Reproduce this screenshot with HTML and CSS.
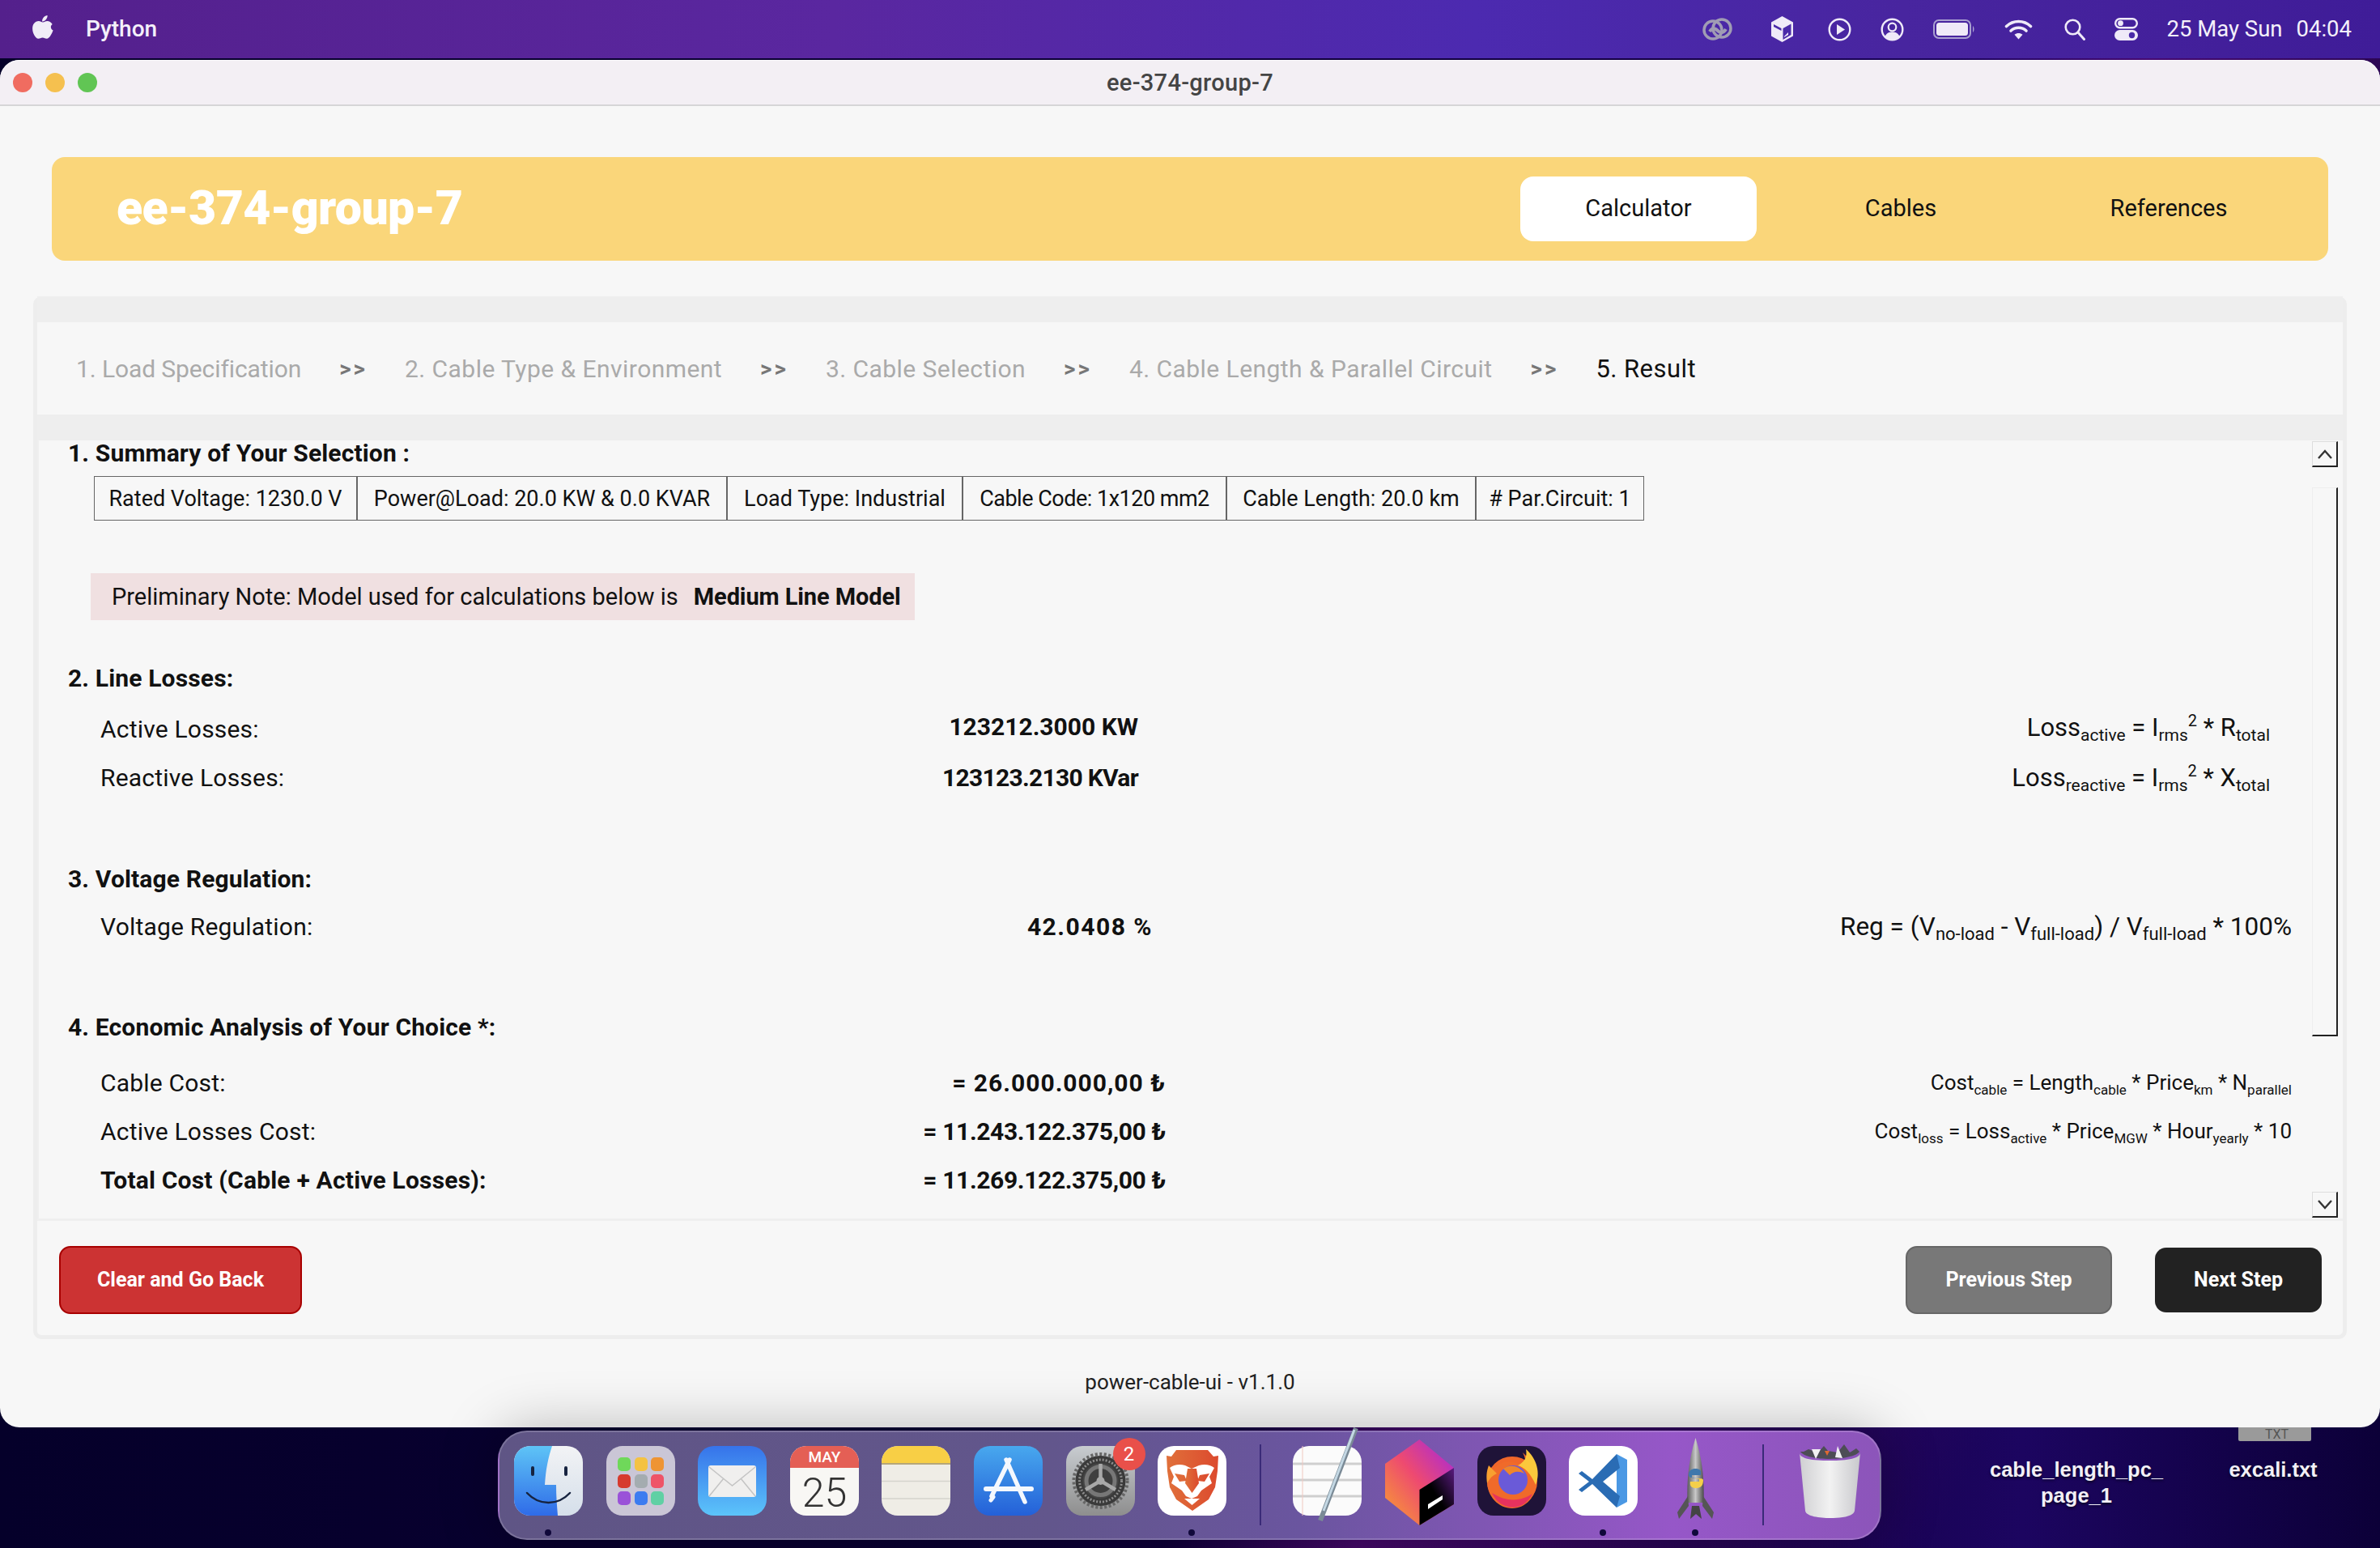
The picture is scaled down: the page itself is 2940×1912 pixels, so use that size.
FILE: index.html
```html
<!DOCTYPE html>
<html lang="en">
<head>
<meta charset="utf-8">
<title>ee-374-group-7</title>
<link rel="stylesheet" href="styles.css">
</head>
<body>
<div class="desktop">
  <header class="menubar">
    <svg class="apple" viewBox="0 0 26 32"><path fill="#f1edf7" d="M18.6 0c.2 2-.6 3.800-1.700 5.100-1.200 1.400-3 2.500-4.800 2.300-.2-1.900.7-3.800 1.700-5C15 1.100 17 .1 18.600 0zM24.700 10.900c-2.800 1.700-2.400 6.200.9 7.700-.8 2.200-1.700 4.200-3.200 6.300-1.300 1.900-2.700 3.800-4.800 3.800-2 0-2.600-1.300-5-1.300s-3.100 1.300-5 1.300c-2.200.1-3.800-2.100-5.100-4C-.1 20.700-1 13.900 2 10.100c1.400-1.900 3.700-3 5.800-3 2.100 0 3.500 1.400 5.200 1.400s2.800-1.400 5.400-1.400c2.300 0 4.700 1.300 6.300 3.800z"/></svg>
    <span class="app-name">Python</span>
    <div class="status">
      <svg class="st st-cc" width="39" height="30" viewBox="0 0 39 30"><g fill="none" stroke="#a09cb4" stroke-width="3.500"><circle cx="14" cy="16" r="11"/><circle cx="25" cy="14" r="11"/><path d="M10 18c4-7 9-2 10-1s6 5 10-2" stroke-width="4"/></g></svg>
      <svg class="st st-box" width="29" height="32" viewBox="0 0 29 32"><path fill="#efeaf8" d="M14.500 0 28 7.500v17L14.500 32 1 24.500v-17z"/><path fill="#4a2aa8" d="M15.500 15 25.500 9.500v13.500L15.500 29zM4 10l9.500 5v3L4 13z"/><path fill="#efeaf8" d="M17 25l5-5v3l-5 3z"/></svg>
      <svg width="29" height="29" viewBox="0 0 29 29"><circle cx="14.500" cy="14.500" r="12.800" fill="none" stroke="#efeaf8" stroke-width="2.400"/><path fill="#efeaf8" d="M11 8l10 6.500L11 21z"/></svg>
      <svg width="29" height="29" viewBox="0 0 29 29"><circle cx="14.500" cy="14.500" r="12.800" fill="none" stroke="#efeaf8" stroke-width="2.400"/><circle cx="14.500" cy="11.500" r="4.800" fill="none" stroke="#efeaf8" stroke-width="2.200"/><path fill="#efeaf8" d="M5.500 23c2-4.500 5.500-5.500 9-5.500s7 1 9 5.500c-2.500 3-5.500 4.500-9 4.500s-6.500-1.500-9-4.500z"/></svg>
      <svg width="52" height="24" viewBox="0 0 52 24"><rect x="1" y="1" width="45" height="22" rx="6" fill="none" stroke="#a9a0d0" stroke-width="2"/><rect x="4" y="4" width="39" height="16" rx="3.500" fill="#efeaf8"/><path d="M49 8c2 1.500 2 6.500 0 8z" fill="#a9a0d0"/></svg>
      <svg class="st-wifi" width="35" height="26" viewBox="0 0 35 26"><g fill="none" stroke="#efeaf8" stroke-width="3.600" stroke-linecap="round"><path d="M2.500 9.500c8.500-8 21.500-8 30 0"/><path d="M8 15c5.500-5 13.500-5 19 0"/></g><path fill="#efeaf8" d="M17.500 25.500 12.500 19.800c3-2.400 7-2.400 10 0z"/></svg>
      <svg width="26" height="27" viewBox="0 0 26 27"><circle cx="10.500" cy="10.500" r="8.800" fill="none" stroke="#efeaf8" stroke-width="2.600"/><path d="M17 17l7.500 8.500" stroke="#efeaf8" stroke-width="3" stroke-linecap="round"/></svg>
      <svg width="29" height="28" viewBox="0 0 29 28"><rect x="1.200" y="1.200" width="26.600" height="11" rx="5.500" fill="none" stroke="#efeaf8" stroke-width="2.400"/><circle cx="7.500" cy="6.700" r="3.400" fill="#efeaf8"/><rect y="15" width="29" height="13" rx="6.500" fill="#efeaf8"/><circle cx="21.500" cy="21.500" r="3.700" fill="#4a2aa8"/></svg>
      <span class="clock"><span>25 May Sun</span><span>04:04</span></span>
    </div>
  </header>

  <div class="file-thumb">TXT</div>
  <div class="file-label file-label-one">cable_length_pc_<br>page_1</div>
  <div class="file-label file-label-two">excali.txt</div>

  <main class="window">
    <div class="titlebar">
      <div class="lights"><i class="light red"></i><i class="light amber"></i><i class="light green"></i></div>
      <div class="win-title">ee-374-group-7</div>
    </div>

    <div class="app-header">
      <div class="brand">ee-374-group-7</div>
      <nav class="tabs">
        <a class="tab tab-active">Calculator</a>
        <a class="tab">Cables</a>
        <a class="tab">References</a>
      </nav>
    </div>

    <section class="panel">
      <div class="strip"></div>
      <div class="steps">
        <span class="step step-first">1. Load Specification</span><span class="sep">&gt;&gt;</span>
        <span class="step">2. Cable Type &amp; Environment</span><span class="sep">&gt;&gt;</span>
        <span class="step">3. Cable Selection</span><span class="sep">&gt;&gt;</span>
        <span class="step">4. Cable Length &amp; Parallel Circuit</span><span class="sep">&gt;&gt;</span>
        <span class="step step-current">5. Result</span>
      </div>
      <div class="strip"></div>
      <div class="scroll-area">
        <div class="content">
          <h2 class="heading">1. Summary of Your Selection :</h2>
          <div class="chips">
            <div class="chip">Rated Voltage: 1230.0 V</div>
            <div class="chip">Power@Load: 20.0 KW &amp; 0.0 KVAR</div>
            <div class="chip">Load Type: Industrial</div>
            <div class="chip chip-tight">Cable Code: 1x120 mm2</div>
            <div class="chip">Cable Length: 20.0 km</div>
            <div class="chip"># Par.Circuit: 1</div>
          </div>
          <div class="note">Preliminary Note: Model used for calculations below is <b>Medium Line Model</b></div>

          <h2 class="heading heading-2">2. Line Losses:</h2>
          <div class="row row-losses row-raised">
            <span class="label">Active Losses:</span>
            <span class="value">123212.3000 KW</span>
            <span class="formula">Loss<sub>active</sub> = I<sub>rms</sub><sup>2</sup> * R<sub>total</sub></span>
          </div>
          <div class="row row-losses">
            <span class="label">Reactive Losses:</span>
            <span class="value value-tight">123123.2130 KVar</span>
            <span class="formula">Loss<sub>reactive</sub> = I<sub>rms</sub><sup>2</sup> * X<sub>total</sub></span>
          </div>

          <h2 class="heading heading-3">3. Voltage Regulation:</h2>
          <div class="row row-reg">
            <span class="label">Voltage Regulation:</span>
            <span class="value">42.0408 %</span>
            <span class="formula formula-large">Reg = (V<sub>no-load</sub> - V<sub>full-load</sub>) / V<sub>full-load</sub> * 100%</span>
          </div>

          <h2 class="heading heading-4">4. Economic Analysis of Your Choice *:</h2>
          <div class="row row-cost">
            <span class="label">Cable Cost:</span>
            <span class="value value-wide">= 26.000.000,00 ₺</span>
            <span class="formula formula-small">Cost<sub>cable</sub> = Length<sub>cable</sub> * Price<sub>km</sub> * N<sub>parallel</sub></span>
          </div>
          <div class="row row-cost">
            <span class="label">Active Losses Cost:</span>
            <span class="value">= 11.243.122.375,00 ₺</span>
            <span class="formula formula-small">Cost<sub>loss</sub> = Loss<sub>active</sub> * Price<sub>MGW</sub> * Hour<sub>yearly</sub> * 10</span>
          </div>
          <div class="row row-cost">
            <span class="label label-total">Total Cost (Cable + Active Losses):</span>
            <span class="value">= 11.269.122.375,00 ₺</span>
          </div>
        </div>
        <div class="scrollbar">
          <div class="sb-btn"><svg width="22" height="14" viewBox="0 0 22 14"><path d="M3 12 11 3l8 9" fill="none" stroke="#333" stroke-width="2.400"/></svg></div>
          <div class="sb-thumb"></div>
          <div class="sb-btn sb-btn-down"><svg width="22" height="14" viewBox="0 0 22 14"><path d="M3 2l8 9 8-9" fill="none" stroke="#333" stroke-width="2.400"/></svg></div>
        </div>
      </div>
      <div class="actions">
        <button class="btn btn-danger">Clear and Go Back</button>
        <button class="btn btn-prev">Previous Step</button>
        <button class="btn btn-next">Next Step</button>
      </div>
    </section>
    <footer class="version">power-cable-ui - v1.1.0</footer>
  </main>

  <div class="dock">
    <div class="dock-item">
      <svg viewBox="0 0 85 86"><defs>
        <linearGradient id="fb" x1="0" y1="0" x2="0" y2="1"><stop offset="0" stop-color="#5ec4f6"/><stop offset="1" stop-color="#2f6be8"/></linearGradient>
        <linearGradient id="fw" x1="0" y1="0" x2="0" y2="1"><stop offset="0" stop-color="#f2f3f5"/><stop offset="1" stop-color="#d5dfea"/></linearGradient>
        <clipPath id="fc"><rect width="85" height="86" rx="20"/></clipPath></defs>
        <g clip-path="url(#fc)"><rect width="85" height="86" fill="url(#fw)"/><path d="M0 0h47c-5 15-8 30-9 48h14c0 14 1 26 2 38H0z" fill="url(#fb)"/></g>
        <rect x="21" y="25" width="4" height="12" rx="2" fill="#16233f"/><rect x="62" y="25" width="4" height="12" rx="2" fill="#16233f"/>
        <path d="M16 58c15 16 38 16 53 0" fill="none" stroke="#16233f" stroke-width="2.500" stroke-linecap="round"/></svg>
      <i class="dot"></i>
    </div>
    <div class="dock-item">
      <svg viewBox="0 0 85 86"><rect width="85" height="86" rx="20" fill="#cac6d6"/>
        <rect x="14" y="14" width="16" height="17" rx="5" fill="#6fd85a"/><rect x="35" y="14" width="16" height="17" rx="5" fill="#f4c242"/><rect x="55" y="14" width="16" height="17" rx="5" fill="#ee9434"/>
        <rect x="14" y="35" width="16" height="17" rx="5" fill="#d63a2e"/><rect x="35" y="35" width="16" height="17" rx="5" fill="#a4acb0"/><rect x="55" y="35" width="16" height="17" rx="5" fill="#ee5468"/>
        <rect x="14" y="56" width="16" height="17" rx="5" fill="#9a52d8"/><rect x="35" y="56" width="16" height="17" rx="5" fill="#3c7cf0"/><rect x="55" y="56" width="16" height="17" rx="5" fill="#60d0a4"/></svg>
    </div>
    <div class="dock-item">
      <svg viewBox="0 0 85 86"><defs><linearGradient id="mb" x1="0" y1="0" x2="0" y2="1"><stop offset="0" stop-color="#3673ea"/><stop offset="1" stop-color="#5cc4fa"/></linearGradient></defs>
        <rect width="85" height="86" rx="20" fill="url(#mb)"/><rect x="13" y="24" width="59" height="39" rx="3" fill="#f0efee"/><path d="M14 26l28.500 23L71 26M14 62l18-22M71 62 53 40" fill="none" stroke="#c4c4c4" stroke-width="1.500"/></svg>
    </div>
    <div class="dock-item">
      <svg viewBox="0 0 85 86"><rect width="85" height="86" rx="20" fill="#f8f7f4"/><path d="M0 27V20A20 20 0 0 1 20 0h45a20 20 0 0 1 20 20v7z" fill="#e45f55"/>
        <text class="cal-month" x="42.500" y="20" text-anchor="middle">MAY</text><text class="cal-day" x="42.500" y="75" text-anchor="middle">25</text></svg>
    </div>
    <div class="dock-item">
      <svg viewBox="0 0 85 86"><rect width="85" height="86" rx="20" fill="#efede6"/><path d="M0 22V20A20 20 0 0 1 20 0h45a20 20 0 0 1 20 20v2z" fill="#f8cf45"/><path d="M0 22h85" stroke="#b5a778" stroke-width="2"/><path d="M0 43.500h85M0 65h85" stroke="#d5d4cd" stroke-width="1.500"/></svg>
    </div>
    <div class="dock-item">
      <svg viewBox="0 0 85 86"><defs><linearGradient id="ab" x1="0" y1="0" x2="0" y2="1"><stop offset="0" stop-color="#48a8ee"/><stop offset="1" stop-color="#2460d8"/></linearGradient></defs>
        <rect width="85" height="86" rx="20" fill="url(#ab)"/><g stroke="#f4f8fe" stroke-linecap="round" fill="none"><path d="M44 17 22 62" stroke-width="5.500"/><path d="M40 17 63 69" stroke-width="5.500"/><path d="M15 53h56" stroke-width="6"/><path d="M24 63l-3 4" stroke-width="5"/></g></svg>
    </div>
    <div class="dock-item">
      <svg viewBox="0 0 85 86"><defs><linearGradient id="pb" x1="0" y1="0" x2="0" y2="1"><stop offset="0" stop-color="#c8ccd0"/><stop offset="1" stop-color="#8e8e8e"/></linearGradient></defs>
        <rect width="85" height="86" rx="20" fill="url(#pb)"/><circle cx="42.500" cy="43" r="31" fill="#3a3a3a"/><circle cx="42.500" cy="43" r="33" fill="none" stroke="#666" stroke-width="4" stroke-dasharray="3 2.500"/><circle cx="42.500" cy="43" r="26" fill="none" stroke="#8e8e8e" stroke-width="3" stroke-dasharray="2 2"/><circle cx="42.500" cy="43" r="21" fill="#777" stroke="#454545" stroke-width="2"/><circle cx="42.500" cy="43" r="15" fill="#3f3f3f"/><path d="M42.500 43V22M42.500 43 24 54M42.500 43 61 54" stroke="#a8a8a8" stroke-width="4.500"/><circle cx="42.500" cy="43" r="5" fill="#a8a8a8"/></svg>
      <span class="badge">2</span>
    </div>
    <div class="dock-item">
      <svg viewBox="0 0 85 86"><defs><linearGradient id="bv" x1="0" y1="0" x2="1" y2="0"><stop offset="0" stop-color="#e0703a"/><stop offset="1" stop-color="#dc4a2e"/></linearGradient></defs><rect width="85" height="86" rx="20" fill="#fff"/><path d="M23 5h39l7 8 6-1-1 19-3 20-8 15-20 14-20-14-8-15-3-20-1-19 6 1z" fill="url(#bv)"/><path d="M15 27c5-4 12-5 19-3l8 4 9-4c7-2 14-1 19 3l-6 11 3 8-13 9-5 7-7 3-7-3-5-7-13-9 3-8z" fill="#fff"/><path d="M37 28h11l3 18-8.500 12L34 46z" fill="url(#bv)"/><path d="M21 34l12 2 3 7-9 1zM64 34l-12 2-3 7 9 1z" fill="url(#bv)"/><path d="M33 65h19l-9.500 8z" fill="#fff"/></svg>
      <i class="dot"></i>
    </div>
    <div class="dock-sep"></div>
    <div class="dock-item">
      <svg class="overflow" viewBox="0 0 85 86"><rect width="85" height="86" rx="20" fill="#fbfbfb"/><path d="M0 22h85M0 42h85M0 62h85" stroke="#cfcfcf" stroke-width="3"/><path d="M12 0v86" stroke="#f0c8c0" stroke-width="1"/><path d="M78-22 34 92" stroke="#7a8a96" stroke-width="6"/><path d="M76-20 38 80" stroke="#c4d8e4" stroke-width="3"/></svg>
    </div>
    <div class="dock-item">
      <svg class="overflow" viewBox="0 0 85 86"><defs><linearGradient id="sb" x1="0" y1="1" x2="1" y2="0"><stop offset="0" stop-color="#f8a42c"/><stop offset=".5" stop-color="#ee4a70"/><stop offset="1" stop-color="#a325e2"/></linearGradient><linearGradient id="sk" x1="1" y1="0" x2="0" y2="1"><stop offset="0" stop-color="#5a1a80"/><stop offset=".5" stop-color="#000"/></linearGradient></defs>
        <path d="M42.500-8 85 27v45L42.500 98 0 64V22z" fill="url(#sb)"/><path d="M85 27v45L42.500 98V54z" fill="url(#sk)"/><path d="M53 78l18-12v-5L53 72z" fill="#fff"/></svg>
    </div>
    <div class="dock-item">
      <svg viewBox="0 0 85 86"><rect width="85" height="86" rx="20" fill="#1f1338"/><circle cx="43" cy="44" r="31" fill="#f0662a"/><path d="M12 44c0 18 14 33 31 33s30-15 30-33c0-12-4-24-17-36 6 12 3 18 0 20-4-8-14-10-24-8-6 2-16 8-20 24z" fill="#f06a2a"/><path d="M60 4c14 12 18 30 12 44-6-14-14-22-22-24 8-4 12-10 10-20z" fill="#fbc83c"/><path d="M14 24c-3 8-3 14-2 22 3-6 7-10 12-12z" fill="#f8a030"/><path d="M18 58c6 14 20 20 32 17 8-2 14-8 18-16-12 8-30 12-50-1z" fill="#e6325e"/><circle cx="44" cy="42" r="18" fill="#6a5ad8"/><path d="M32 28c8-6 20-4 26 6-8-4-14-2-18 2z" fill="#f0862a"/></svg>
    </div>
    <div class="dock-item">
      <svg viewBox="0 0 85 86"><rect width="85" height="86" rx="20" fill="#fff"/><path d="M59 10 72 17v52l-13 7z" fill="#4a98e4"/><path d="M59 10 29 41 16 31l-4 3 13 10-13 10 4 3 13-10 30 29 4-14-21-18 21-17z" fill="#2a6cb4"/></svg>
      <i class="dot"></i>
    </div>
    <div class="dock-item">
      <svg class="overflow" viewBox="0 0 85 86"><defs><linearGradient id="rk" x1="0" y1="0" x2="1" y2="0"><stop offset="0" stop-color="#5a5a5a"/><stop offset=".5" stop-color="#c8c8c8"/><stop offset="1" stop-color="#4a4a4a"/></linearGradient></defs>
        <path d="M42.500-10c8 26 11 50 10 80H32.500c-1-30 2-54 10-80z" fill="url(#rk)"/><path d="M33 62 20 82l2 8 12-16zM52 62l13 20-2 8-12-16z" fill="#555"/><path d="M38 74h9l3 16-7-6-7 6z" fill="#444"/><path d="M34 36c0-6 4-8 8-8 6 0 8 2 7 8H38v3h7c-3 0-10 2-11-3z" fill="#3f78ac"/><path d="M52 42c0 8-4 10-9 10-5 0-8-2-7-8h11v-3H41c4 0 10-2 11 1z" fill="#f4cf4a"/></svg>
      <i class="dot"></i>
    </div>
    <div class="dock-sep dock-sep-two"></div>
    <div class="dock-item">
      <svg class="overflow" viewBox="0 0 85 86"><defs><linearGradient id="tr" x1="0" y1="0" x2="1" y2="0"><stop offset="0" stop-color="#cfcfd2"/><stop offset=".5" stop-color="#f2f2f2"/><stop offset="1" stop-color="#c8c8cc"/></linearGradient></defs>
        <path d="M5 8c0 8 16 10 37 10s38-2 38-10l-7 72c-1 7-17 9-30 9s-30-2-31-9z" fill="url(#tr)"/><path d="M6 7c8 12 64 12 73 0l-4-4-8 5-7-10-8 10-12-2-5-6-7 8-12-4-6 3z" fill="#4d4d55"/><path d="M20 4l5 12 6-12zM52 0l-3 14 9 1z" fill="#f2f2f2"/><path d="M36 6l3 6 3-6z" fill="#e06a30"/></svg>
    </div>
  </div>
</div>
</body>
</html>
```

FILE: styles.css
```css
* { box-sizing: border-box; }
html, body { margin: 0; padding: 0; }
body { width: 2940px; height: 1912px; overflow: hidden; font-family: Roboto, "Noto Sans", sans-serif; color: #111; }

.desktop {
  position: relative;
  width: 2940px;
  height: 1912px;
  overflow: hidden;
  background:
    linear-gradient(118deg, transparent 0 62%, rgba(110,15,140,.55) 68%, rgba(60,10,100,.5) 78%, transparent 86%),
    linear-gradient(90deg, #05002a 0, #0a0032 40%, #150045 70%, #1c0560 85%, #0c0038 100%);
}

/* menu bar */
.menubar {
  height: 72px;
  display: flex;
  align-items: center;
  padding-left: 40px;
  color: #f4f0fa;
  background: linear-gradient(90deg, #54208c 0, #5a27a0 35%, #4c2ab0 62%, #48259f 80%, #3f1c98 100%);
}
.apple { width: 26px; height: 32px; margin-top: -2px; }
.app-name { margin-left: 40px; font-size: 28px; font-weight: 500; margin-top: -2px; }
.status { margin-left: auto; margin-right: 35px; display: flex; align-items: center; gap: 36px; }
.st-cc { margin-right: 10px; }
.st-box { margin-right: 6px; }
.st-wifi { margin-right: 3px; }
.clock { display: flex; gap: 17px; font-size: 27.500px; margin-top: -2px; }

/* desktop files */
.file-thumb {
  position: absolute; left: 2765px; top: 1750px; width: 90px; height: 30px;
  background: #9a9a9a; color: #555; font-size: 16px; text-align: right; padding: 14px 28px 0 0; line-height: 16px; border-radius: 2px;
}
.file-label {
  position: absolute; color: #f2f0f6; font-family: "Liberation Sans", Arial, sans-serif; font-weight: 700;
  font-size: 25.500px; line-height: 32px; text-align: center; text-shadow: 0 2px 3px rgba(0,0,0,.6); transform: translateX(-50%);
}
.file-label-one { left: 2565px; top: 1799px; }
.file-label-two { left: 2808px; top: 1799px; }

/* window */
.window {
  position: relative;
  margin-top: 2px;
  height: 1689px;
  background: #f7f7f7;
  border-radius: 24px;
  display: flex;
  flex-direction: column;
}
.titlebar {
  position: relative;
  height: 57px;
  flex: none;
  background: #f3eff4;
  border-top: 1px solid #fbf9fc;
  border-bottom: 2px solid #d6d5d7;
  border-radius: 24px 24px 0 0;
  display: flex;
  align-items: center;
  justify-content: center;
}
.lights { position: absolute; left: 16px; top: 15px; display: flex; gap: 16px; }
.light { display: block; width: 24px; height: 24px; border-radius: 50%; }
.red { background: #f06c60; }
.amber { background: #f5c04f; }
.green { background: #61c554; }
.win-title { font-size: 29px; font-weight: 500; color: #444; letter-spacing: .3px; margin-top: -1px; }

/* app header */
.app-header {
  flex: none;
  margin: 63px 64px 0;
  height: 128px;
  background: #fad67a;
  border-radius: 16px;
  display: flex;
  align-items: center;
  padding-left: 80px;
}
.brand { font-size: 59px; font-weight: 900; color: #fff; letter-spacing: -.6px; margin-top: -3px; }
.tabs { margin-left: auto; margin-right: 44px; display: grid; grid-template-columns: 292px 356px 306px; height: 80px; }
.tab { display: flex; align-items: center; justify-content: center; font-size: 29px; color: #111; border-radius: 16px; padding-bottom: 2px; }
.tab-active { background: #fff; }

/* panel */
.panel {
  flex: none;
  margin: 44px 41px 0;
  height: 1288px;
  border: 5px solid #ededed;
  border-top: 0;
  border-radius: 10px;
  display: flex;
  flex-direction: column;
}
.strip { flex: none; height: 32px; background: #eeeeee; }
.steps { flex: none; height: 114px; display: flex; align-items: center; padding-left: 48px; font-size: 30px; color: #aaa; letter-spacing: .45px; }
.step-first { letter-spacing: -.1px; }
.sep { margin: 0 46px 0 47px; font-size: 28px; font-weight: 700; color: #777; letter-spacing: 3px; }
.step-current { color: #111; font-size: 31px; }

.scroll-area { flex: none; height: 964px; display: flex; border-bottom: 3px solid #efefef; border-left: 2px solid #efefef; }
.content { flex: 1; min-width: 0; padding-left: 36px; }
.heading { margin: 0; height: 32px; line-height: 32px; font-size: 30px; font-weight: 700; letter-spacing: .15px; }
.heading-2 { margin-top: 56px; }
.heading-3 { margin-top: 80px; }
.heading-4 { margin-top: 79px; margin-bottom: 22px; }
.chips {
  margin: 12px 0 0 32px;
  display: grid;
  grid-template-columns: 325px 457px 291px 326px 308px 208px;
  width: 1915px;
  height: 55px;
}
.chip { display: flex; align-items: center; justify-content: center; border: 1px solid #666; font-size: 27px; }
.chip-tight { letter-spacing: -.5px; }
.note {
  margin: 65px 0 0 28px;
  width: 1018px;
  height: 58px;
  background: #f0e0e1;
  display: flex;
  align-items: center;
  gap: 19px;
  padding-left: 26px;
  font-size: 29px;
  white-space: nowrap;
}
.note b { font-weight: 700; letter-spacing: -.1px; }
.row { display: grid; grid-template-columns: 440px auto 1fr; height: 60px; align-items: center; padding-left: 40px; font-size: 30px; }
.heading-2 + .row { margin-top: 16px; }
.heading-3 + .row { margin-top: 12px; }
.label { white-space: nowrap; letter-spacing: .2px; }
.value { font-weight: 700; text-align: right; white-space: nowrap; }
.value-tight { letter-spacing: -.7px; }
.row-raised .value { padding-bottom: 6px; }
.row-raised .formula { padding-bottom: 4px; }
.row-losses .value { width: 842px; }
.row-reg .value { width: 860px; letter-spacing: 1.500px; }
.row-cost .value { width: 876px; letter-spacing: -.35px; }
.row-cost .value-wide { letter-spacing: 1px; }
.label-total { font-weight: 700; }
.formula { text-align: right; padding-right: 52px; font-size: 31px; white-space: nowrap; }
.formula sub { font-size: 21px; line-height: 0; vertical-align: -6px; }
.formula sup { font-size: 20px; line-height: 0; vertical-align: 12px; }
.formula-large { font-size: 31.500px; padding-right: 25px; }
.formula-large sub { font-size: 22px; }
.formula-small { font-size: 26px; padding-right: 25px; }
.formula-small sub { font-size: 17px; }

.scrollbar { flex: none; width: 32px; margin-right: 6px; display: flex; flex-direction: column; align-items: stretch; }
.sb-btn {
  flex: none; height: 32px; margin-top: 1px; border-right: 2px solid #222; border-bottom: 2px solid #222; border-left: 1px solid #ddd; border-top: 1px solid #ddd;
  display: flex; align-items: center; justify-content: center;
}
.sb-thumb { flex: none; height: 678px; margin-top: 25px; border-right: 2px solid #222; border-bottom: 2px solid #222; border-left: 1px solid #eee; border-top: 1px solid #eee; }
.sb-btn-down { margin-top: auto; margin-bottom: 1px; }

.actions { flex: none; height: 145px; display: flex; align-items: center; padding: 0 26px 0 27px; gap: 53px; }
.btn { font-family: inherit; font-size: 25px; font-weight: 700; color: #fff; border-radius: 14px; }
.btn-danger { width: 300px; height: 84px; background: #cc3333; border: 2px solid #a80000; margin-right: auto; }
.btn-prev { width: 255px; height: 84px; background: #787878; border: 2px solid #666; }
.btn-next { width: 206px; height: 80px; background: #222; border: 0; }

.version { flex: 1; display: flex; align-items: center; justify-content: center; font-size: 26px; color: #222; padding-bottom: 3px; }

/* dock */
.dock {
  position: relative;
  margin: 4px 0 0 615px;
  width: 1709px;
  height: 135px;
  display: flex;
  align-items: flex-start;
  gap: 28.600px;
  padding: 17px 0 0 18px;
  border-radius: 36px;
  border: 2px solid rgba(255,255,255,.18);
  background: linear-gradient(90deg, #5f5585 0, #62568c 40%, #6a559f 58%, #9657c8 85%, #8c55ba 100%);
  box-shadow: 0 0 70px rgba(0,0,0,.28);
}
.dock-item { position: relative; flex: none; width: 85px; height: 86px; }
.dock-item svg { display: block; width: 85px; height: 86px; }
.dock-item svg.overflow { overflow: visible; }
.dot { position: absolute; left: 38px; top: 103px; width: 8px; height: 8px; border-radius: 50%; background: #10083a; }
.badge {
  position: absolute; left: 58px; top: -10px; width: 40px; height: 40px; border-radius: 50%;
  background: #e9504a; color: #fff; font-size: 24px; display: flex; align-items: center; justify-content: center;
}
.dock-sep { flex: none; width: 2px; height: 100px; margin: -2px 11px 0 12px; background: #3a2a78; }
.dock-sep-two { margin: -2px 10px 0 12px; }
.cal-month { font-family: Roboto, sans-serif; font-size: 19px; font-weight: 500; fill: #fff; }
.cal-day { font-family: Roboto, sans-serif; font-size: 50px; font-weight: 300; fill: #333; }
```
